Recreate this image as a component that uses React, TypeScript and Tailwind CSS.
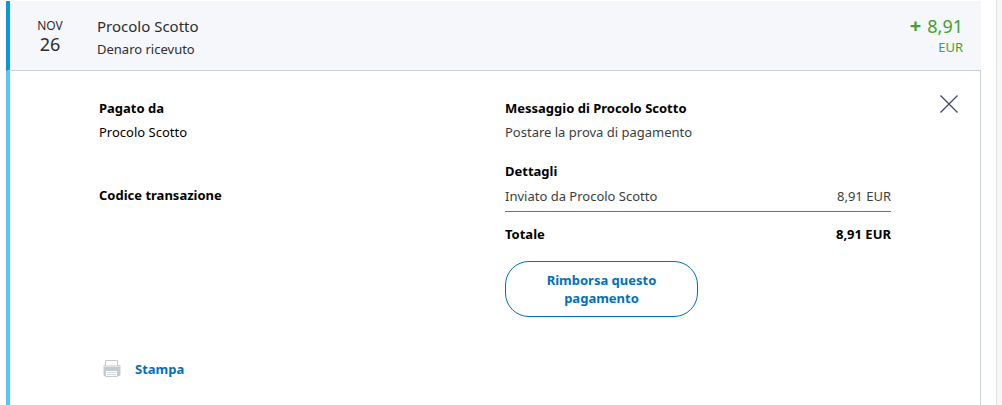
import React from "react";

function TransactionHeader() {
  return (
    <header className="flex h-[70px] items-start border-b border-l-4 border-b-[#cbd2d6] border-l-[#009cde] bg-[#f5f7fa] text-[#2c2e2f]">
      <time dateTime="11-26" className="flex w-20 shrink-0 flex-col items-center pt-4">
        <span className="text-xs leading-[18px]">NOV</span>
        <span className="text-lg leading-[18px]">26</span>
      </time>
      <div className="flex-1 pt-3 pl-[7px]">
        <h1 className="text-[15px] leading-[26px]">Procolo Scotto</h1>
        <p className="text-[13px] leading-5">Denaro ricevuto</p>
      </div>
      <div className="pt-3 pr-[18px] text-right text-[#43a02e]">
        <p className="flex items-center justify-end gap-1.5 text-lg leading-[26px]">
          <span className="text-xl leading-6 font-bold">+</span>
          <span>8,91</span>
        </p>
        <p className="text-[13px] leading-4">EUR</p>
      </div>
    </header>
  );
}

function PrinterIcon() {
  return (
    <svg viewBox="0 0 18 18" className="size-[18px]" aria-hidden="true">
      <path d="M2.500 7V.5h12V7" fill="white" stroke="#c3cbd1" />
      <path d="M2 5h14q1.500 0 1.500 1.500v8q0 1.500-1.500 1.500H2Q.5 16 .5 14.500v-8Q.5 5 2 5z" fill="#c3cbd1" />
      <path d="M3 5h11" stroke="white" />
      <path d="M1 6.500h16" stroke="#dfe4e8" />
      <path d="M2.500 10.500h12v6h-12z" fill="white" stroke="#c3cbd1" />
      <path d="M4 12.500h9M4 14.500h9" stroke="#d3d9dd" />
    </svg>
  );
}

function TransactionDetails() {
  return (
    <div className="flex flex-1 items-start border-r border-l-4 border-r-[#cbd2d6] border-l-[#54c8ff] pt-[25px] pl-[89px]">
      <div className="grid flex-1 grid-cols-[406fr_386fr] text-[13px] leading-6">
        <section>
          <h2 className="font-bold">Pagato da</h2>
          <p>Procolo Scotto</p>
          <h2 className="mt-[39px] font-bold">Codice transazione</h2>
          <button type="button" className="mt-[150px] ml-1 flex items-center gap-[14px] font-bold text-[#0070ba]">
            <PrinterIcon />
            Stampa
          </button>
        </section>
        <section>
          <h2 className="font-bold">Messaggio di Procolo Scotto</h2>
          <p className="text-[#3b3e40]">Postare la prova di pagamento</p>
          <h2 id="details" className="mt-[15px] font-bold">Dettagli</h2>
          <table aria-labelledby="details" className="w-full border-collapse">
            <tbody>
              <tr className="border-b border-[#6c7378] text-[#3b3e40]">
                <th scope="row" className="pt-px pb-[3px] text-left font-normal">Inviato da Procolo Scotto</th>
                <td className="pt-px pb-[3px] text-right">8,91 EUR</td>
              </tr>
              <tr className="font-bold">
                <th scope="row" className="pt-[10px] text-left">Totale</th>
                <td className="pt-[10px] text-right">8,91 EUR</td>
              </tr>
            </tbody>
          </table>
          <button type="button" className="mt-[15px] w-1/2 rounded-3xl border border-[#0070ba] px-6 py-[9px] text-center leading-[18px] font-bold text-[#0070ba]">
            Rimborsa questo pagamento
          </button>
        </section>
      </div>
      <div className="flex w-[89px] shrink-0 justify-end pr-[22px]">
        <button type="button" aria-label="Chiudi" className="-mt-px">
          <svg viewBox="0 0 18 18" className="size-[18px]" fill="none" stroke="#40446b" strokeWidth="1.200" aria-hidden="true">
            <path d="M.5.5l17 17M17.500.5l-17 17" />
          </svg>
        </button>
      </div>
    </div>
  );
}

export default function App() {
  return (
    <div className="flex min-h-screen bg-[#f5f7fa] pr-[5px] font-['Noto_Sans',sans-serif] text-black">
      <main className="flex flex-1 border-r border-[#dfe3e8] bg-white pt-px pr-[15px] pl-1.5">
        <article className="flex flex-1 flex-col">
          <TransactionHeader />
          <TransactionDetails />
        </article>
      </main>
    </div>
  );
}
